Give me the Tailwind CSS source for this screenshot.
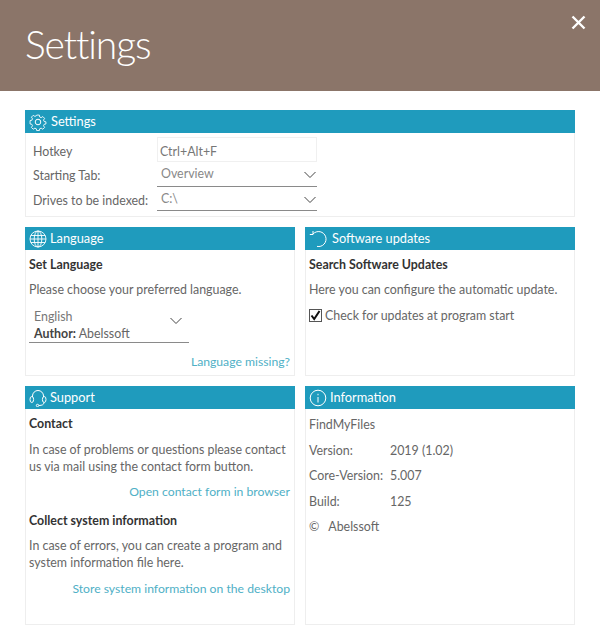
<!DOCTYPE html>
<html><head><meta charset="utf-8"><script src="https://cdn.jsdelivr.net/npm/@tailwindcss/browser@4"></script></head>
<body class="m-0 bg-white w-[600px] h-[640px] overflow-hidden font-['Lato','Open_Sans',sans-serif] text-[12.4px] text-[#666]">
<header class="h-[91px] bg-[#8b7569] flex justify-between pl-[25px] pr-[14px]">
  <h1 class="text-[39px] font-light tracking-[-1.100px] text-white leading-none mt-[25px]">Settings</h1>
  <svg class="mt-[15px]" width="15" height="15" viewBox="0 0 15 15"><path d="M1.5 1.5L13.5 13.5M13.5 1.5L1.5 13.5" stroke="#fff" stroke-width="2.4"/></svg>
</header>
<main class="px-[25px] pt-[19px] flex flex-col gap-[10px]">
  <section class="h-[107px] border border-[#eee] border-t-0">
    <div class="h-[23px] -mx-px bg-[#1f9bbd] text-white flex items-center pl-[4px] gap-[4px] text-[12.800px]">
      <svg width="18" height="18" viewBox="0 0 18 18" fill="none" stroke="#fff" stroke-width="1"><circle cx="9" cy="9" r="2.8"/><path d="M7.5 1.2h3l.4 2.2 1.6.7 1.9-1.2 2 2-1.2 1.9.7 1.6 2 .4v2.4l-2 .4-.7 1.6 1.2 1.9-2 2-1.9-1.2-1.6.7-.4 2h-3l-.4-2-1.6-.7-1.9 1.2-2-2 1.2-1.9-.7-1.6-2-.4V7.400l2-.4.7-1.600-1.200-1.900 2-2 1.900 1.200 1.600-.7z" transform="translate(1 1) scale(.89)"/></svg>
      <span>Settings</span>
    </div>
    <div class="pl-[7px] pr-[257px] pt-[4px] grid grid-cols-[124px_1fr] items-start">
      <span class="h-[25px] leading-[29px]">Hotkey</span>
      <div class="h-[25px] border border-[#f0f0f0] pl-[2px] leading-[27px] text-[#777]">Ctrl+Alt+F</div>
      <span class="h-[25px] leading-[28px]">Starting Tab:</span>
      <div class="h-[25px] border-b border-[#8a8a8a] pl-[4px] flex justify-between pr-[1px] text-[#888] leading-[24px]">Overview<svg class="mt-[9px]" width="12" height="8" viewBox="0 0 12 8" fill="none" stroke="#444"><path d="M.5 1L6 6.500 11.500 1"/></svg></div>
      <span class="h-[24px] leading-[28px]">Drives to be indexed:</span>
      <div class="h-[24px] border-b border-[#8a8a8a] pl-[4px] flex justify-between pr-[1px] text-[#888] leading-[24px]">C:\<svg class="mt-[9px]" width="12" height="8" viewBox="0 0 12 8" fill="none" stroke="#444"><path d="M.5 1L6 6.500 11.500 1"/></svg></div>
    </div>
  </section>
  <div class="grid grid-cols-2 gap-[10px]">
    <section class="h-[149px] border border-[#eee] border-t-0">
      <div class="h-[23px] -mx-px bg-[#1f9bbd] text-white flex items-center pl-[4px] gap-[3px] text-[12.800px]">
        <svg width="18" height="18" viewBox="0 0 18 18" fill="none" stroke="#fff" stroke-width=".9"><circle cx="9" cy="9" r="8"/><ellipse cx="9" cy="9" rx="3.800" ry="8"/><path d="M9 1v16M1.800 5.500h14.400M1 9h16M1.800 12.500h14.400"/></svg>
        <span>Language</span>
      </div>
      <div class="pl-[3px] pr-[4px]">
        <h2 class="font-bold text-[#333] leading-[17px] mt-[6px]">Set Language</h2>
        <p class="leading-[17px] mt-[8px]">Please choose your preferred language.</p>
        <div class="w-[160px] h-[35px] mt-[10px] border-b border-[#8a8a8a] pl-[5px] flex justify-between pr-[7px]">
          <div class="leading-[17px]"><div class="text-[#777]">English</div><div><b class="text-[#444]">Author:</b> Abelssoft</div></div>
          <svg class="mt-[9px]" width="12" height="8" viewBox="0 0 12 8" fill="none" stroke="#444"><path d="M.5 1L6 6.500 11.500 1"/></svg>
        </div>
        <p class="text-right text-[#4fb0c6] text-[12.200px] leading-[17px] mt-[10px]">Language missing?</p>
      </div>
    </section>
    <section class="h-[149px] border border-[#eee] border-t-0">
      <div class="h-[23px] -mx-px bg-[#1f9bbd] text-white flex items-center pl-[4px] gap-[5px] text-[12.800px]">
        <svg width="18" height="18" viewBox="0 0 18 18" fill="none" stroke="#fff" stroke-width="1"><path d="M4 4A7.500 7.500 0 1 1 8 16.400"/><path d="M4 1V4.500H.8"/></svg>
        <span>Software updates</span>
      </div>
      <div class="pl-[3px] pr-[4px]">
        <h2 class="font-bold text-[#333] leading-[17px] mt-[6px]">Search Software Updates</h2>
        <p class="leading-[17px] mt-[8px]">Here you can configure the automatic update.</p>
        <div class="flex items-center gap-[3px] mt-[9px] leading-[17px]">
          <span class="w-[13px] h-[13px] border border-[#555] flex items-center justify-center"><svg width="11" height="11" viewBox="0 0 11 11" fill="none" stroke="#111" stroke-width="2"><path d="M1.500 5.500L4.200 9 9.500 1"/></svg></span>
          <span>Check for updates at program start</span>
        </div>
      </div>
    </section>
    <section class="h-[239px] border border-[#eee] border-t-0">
      <div class="h-[23px] -mx-px bg-[#1f9bbd] text-white flex items-center pl-[4px] gap-[3px] text-[12.800px]">
        <svg width="18" height="18" viewBox="0 0 18 18" fill="none" stroke="#fff" stroke-width="1"><path d="M3.500 8V7a5.500 5.500 0 0 1 11 0v1"/><ellipse cx="2.800" cy="10.500" rx="1.800" ry="3"/><ellipse cx="15.200" cy="10.500" rx="1.800" ry="3"/><path d="M15 13.500c0 2-2 3-5 3"/><circle cx="8.500" cy="16.500" r="1.200"/></svg>
        <span>Support</span>
      </div>
      <div class="pl-[3px] pr-[4px]">
        <h2 class="font-bold text-[#333] leading-[17px] mt-[6px]">Contact</h2>
        <p class="leading-[17px] mt-[9px]">In case of problems or questions please contact us via mail using the contact form button.</p>
        <p class="text-right text-[#4fb0c6] text-[12.200px] leading-[17px] mt-[8px]">Open contact form in browser</p>
        <h2 class="font-bold text-[#333] leading-[17px] mt-[12px]">Collect system information</h2>
        <p class="leading-[17px] mt-[8px]">In case of errors, you can create a program and system information file here.</p>
        <p class="text-right text-[#4fb0c6] text-[12.200px] leading-[17px] mt-[9px]">Store system information on the desktop</p>
      </div>
    </section>
    <section class="h-[239px] border border-[#eee] border-t-0">
      <div class="h-[23px] -mx-px bg-[#1f9bbd] text-white flex items-center pl-[4px] gap-[3px] text-[12.800px]">
        <svg width="18" height="18" viewBox="0 0 18 18" fill="none" stroke="#fff" stroke-width="1"><circle cx="9" cy="9" r="7.800"/><path d="M9 8v5.500M9 4.800v1.500"/></svg>
        <span>Information</span>
      </div>
      <div class="pl-[3px] pt-[7px] grid grid-cols-[81px_1fr] auto-rows-[25.500px] leading-[17px]">
        <span class="col-span-2">FindMyFiles</span>
        <span>Version:</span><span>2019 (1.02)</span>
        <span>Core-Version:</span><span>5.007</span>
        <span>Build:</span><span>125</span>
        <span class="col-span-2 flex gap-[9px]"><span>©</span><span>Abelssoft</span></span>
      </div>
    </section>
  </div>
</main>
</body></html>
